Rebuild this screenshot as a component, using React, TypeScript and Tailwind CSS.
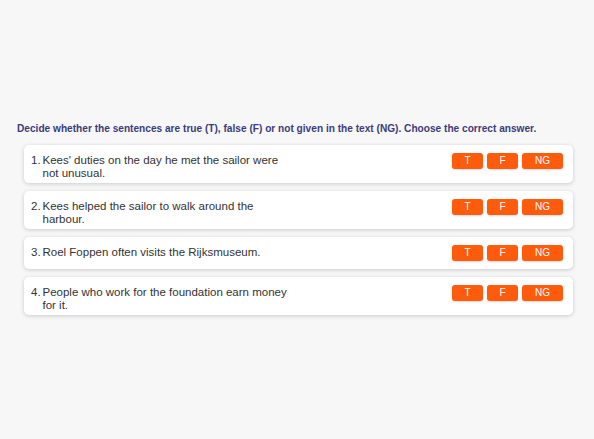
const questions = [
  "Kees' duties on the day he met the sailor were not unusual.",
  "Kees helped the sailor to walk around the harbour.",
  "Roel Foppen often visits the Rijksmuseum.",
  "People who work for the foundation earn money for it.",
]

const options = [
  { label: "T", width: "w-[31px]" },
  { label: "F", width: "w-[31px]" },
  { label: "NG", width: "w-[41px]" },
]

const QuestionRow = ({ index, text }: { index: number; text: string }) => (
  <div className="flex items-start justify-between rounded-[5px] bg-white pl-[7px] pr-[10px] pt-[8px] pb-[3px] shadow-[0_1px_4px_rgba(0,0,0,0.18)]">
    <div className="mt-[1px] flex text-[11.5px] leading-[13px] text-[#333]">
      <span className="w-[11.5px] shrink-0">{index}.</span>
      <span className="w-[248px]">{text}</span>
    </div>
    <div className="mb-[5px] flex gap-[4px]">
      {options.map((o) => (
        <button
          key={o.label}
          className={`${o.width} h-[16px] rounded-[3px] bg-[#fe5b0c] text-[10px] leading-[16px] text-white shadow-[0_1px_2px_rgba(0,0,0,0.15)]`}
        >
          {o.label}
        </button>
      ))}
    </div>
  </div>
)

export default function App() {
  return (
    <div className="min-h-screen bg-[#f7f7f7] pt-[122px] font-['Liberation_Sans',Arial,sans-serif]">
      <p className="ml-[17px] text-[10.15px] font-bold leading-[13px] text-[#3c3c7a]">
        Decide whether the sentences are true (T), false (F) or not given in the text (NG). Choose the correct answer.
      </p>
      <div className="ml-[24px] mt-[10px] flex w-[549px] flex-col gap-2">
        {questions.map((q, i) => (
          <QuestionRow key={i} index={i + 1} text={q} />
        ))}
      </div>
    </div>
  )
}
